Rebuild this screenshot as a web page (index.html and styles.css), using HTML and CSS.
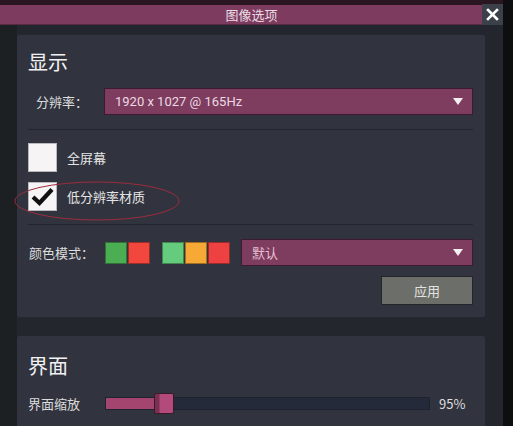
FILE: index.html
```html
<!DOCTYPE html>
<html lang="zh-CN">
<head>
<meta charset="utf-8">
<title>图像选项</title>
<link rel="stylesheet" href="styles.css">
</head>
<body>
<div class="window">
  <div class="topstrip"></div>
  <div class="titlebar">
    <div class="title">图像选项</div>
    <div class="close">
      <svg width="13" height="13" viewBox="0 0 13 13"><path d="M2 2 L11 11 M11 2 L2 11" stroke="#fff" stroke-width="2.6" stroke-linecap="square"/></svg>
    </div>
  </div>
  <div class="body">
    <section class="card card-display">
      <h2 class="heading">显示</h2>
      <div class="row res-row">
        <span class="label res-label">分辨率：</span>
        <div class="select select-res">
          <span class="select-text">1920 x 1027 @ 165Hz</span>
          <span class="arrow"></span>
        </div>
      </div>
      <div class="sep sep-1"></div>
      <div class="check-row check-1">
        <span class="checkbox"></span>
        <span class="check-label">全屏幕</span>
      </div>
      <div class="check-row check-2">
        <span class="checkbox">
          <svg width="27" height="27" viewBox="0 0 27 27"><path d="M4 14 L10.5 20 L23 6.5" fill="none" stroke="#111" stroke-width="4.2" stroke-linejoin="miter"/></svg>
        </span>
        <span class="check-label">低分辨率材质</span>
      </div>
      <svg class="ellipse" width="168" height="42" viewBox="0 0 168 42"><ellipse cx="84" cy="21" rx="82" ry="19" fill="none" stroke="#9c2c3e" stroke-width="1"/></svg>
      <div class="sep sep-2"></div>
      <div class="row color-row">
        <span class="label color-label">颜色模式：</span>
        <div class="swatches">
          <span class="sw sw-green"></span><span class="sw sw-red"></span>
        </div>
        <div class="swatches swatches-3">
          <span class="sw sw-lgreen"></span><span class="sw sw-orange"></span><span class="sw sw-red2"></span>
        </div>
        <div class="select select-mode">
          <span class="select-text mode-text">默认</span>
          <span class="arrow"></span>
        </div>
      </div>
      <div class="btn-row">
        <button class="apply">应用</button>
      </div>
    </section>
    <section class="card card-ui">
      <h2 class="heading">界面</h2>
      <div class="row slider-row">
        <span class="label slider-label">界面缩放</span>
        <div class="slider">
          <div class="fill" style="width:55px"></div>
          <div class="thumb"></div>
        </div>
        <span class="pct">95%</span>
      </div>
    </section>
  </div>
</div>
</body>
</html>
```
FILE: styles.css
```css
* { box-sizing: border-box; }
html, body { margin: 0; padding: 0; }
body {
  background: #0c0e0f;
  width: 513px;
  height: 426px;
  overflow: hidden;
  font-family: "Noto Sans CJK SC", "Noto Sans", sans-serif;
  color: #e6e6e6;
}
.window {
  width: 503px;
  height: 426px;
  background: #23262d;
  overflow: hidden;
}
.topstrip {
  height: 5px;
  background: #2a1620;
}
.titlebar {
  display: flex;
  height: 20px;
  background: #23262d;
}
.title {
  flex: 1;
  background: #7d3c5f;
  color: #eadde4;
  font-size: 13px;
  line-height: 20px;
  text-align: center;
  padding-left: 21px;
  border-bottom: 1px solid #5a2a44;
}
.close {
  width: 21px;
  height: 21px;
  margin-top: -1px;
  background: #3b4049;
  display: flex;
  align-items: center;
  justify-content: center;
}
.body {
  border-left: 17px solid #1d2023;
  padding: 10px 18px 0 0;
  display: flex;
  flex-direction: column;
  gap: 19px;
}
.card {
  position: relative;
  background: #31343f;
  border-radius: 2px;
  padding: 13px 12px 12px 11px;
}
.heading {
  margin: 0;
  font-size: 20px;
  line-height: 28px;
  font-weight: normal;
  color: #f2f2f2;
}
.row {
  display: flex;
  align-items: center;
}
.label {
  font-size: 13px;
  color: #dcdcdc;
}
.res-row { margin-top: 12px; }
.res-label { padding-left: 8px; width: 76px; }
.select {
  background: #7e3d5f;
  border: 1px solid #3e1a2e;
  display: flex;
  align-items: center;
  padding: 0 9px 0 10px;
}
.select-res { flex: 1; height: 27px; }
.select-text {
  flex: 1;
  font-family: Roboto, "Noto Sans CJK SC", sans-serif;
  font-size: 13px;
  color: #ecd9e3;
}
.mode-text { color: #e7bfd2; font-family: "Noto Sans CJK SC", sans-serif; }
.arrow {
  width: 0; height: 0;
  border-left: 5px solid transparent;
  border-right: 5px solid transparent;
  border-top: 7px solid #f4f0f2;
}
.sep {
  height: 1px;
  background: #24262d;
}
.sep-1 { margin-top: 14px; }
.check-row {
  display: flex;
  align-items: center;
  gap: 10px;
}
.check-1 { margin-top: 13px; }
.check-2 { margin-top: 10px; }
.checkbox {
  width: 29px;
  height: 29px;
  background: #f6f4f5;
  border: 1px solid #b9b9bd;
  display: flex;
  align-items: center;
  justify-content: center;
}
.check-label {
  font-size: 13px;
  color: #e4e4e4;
}
.ellipse {
  position: absolute;
  left: -4px;
  top: 145px;
}
.sep-2 { margin-top: 13px; }
.color-row { margin-top: 14px; }
.color-label { width: 77px; padding-left: 1px; }
.swatches {
  display: flex;
  gap: 1px;
}
.swatches-3 { margin-left: 12px; }
.sw {
  width: 22px;
  height: 22px;
  border: 1px solid rgba(0,0,0,0.35);
}
.sw-green { background: #4cae52; }
.sw-red { background: #f2473c; }
.sw-lgreen { background: #64cc7c; }
.sw-orange { background: #f6aa35; }
.sw-red2 { background: #ee4242; }
.select-mode { flex: 1; height: 27px; margin-left: 11px; }
.btn-row {
  display: flex;
  justify-content: flex-end;
  margin-top: 10px;
}
.apply {
  width: 92px;
  height: 29px;
  background: #6c6e69;
  border: 1px solid #24262a;
  color: #e2e2e2;
  font-family: "Noto Sans CJK SC", "Noto Sans", sans-serif;
  font-size: 13px;
  padding: 0;
}
.card-ui { padding-top: 16px; height: 120px; }
.slider-row { margin-top: 14px; }
.slider-label { width: 77px; }
.slider {
  position: relative;
  width: 325px;
  height: 13px;
  background: #242a39;
  border: 1px solid #1f2330;
}
.fill {
  height: 100%;
  background: #a3456f;
}
.thumb {
  position: absolute;
  left: 48px;
  top: -5px;
  width: 20px;
  height: 21px;
  background: linear-gradient(90deg, #7b3052 0, #7b3052 4px, #b24b7c 5px, #b24b7c 100%);
  border: 1px solid #3a1a2a;
  border-radius: 2px;
}
.pct {
  margin-left: 9px;
  font-size: 13px;
  color: #dedede;
}
```
